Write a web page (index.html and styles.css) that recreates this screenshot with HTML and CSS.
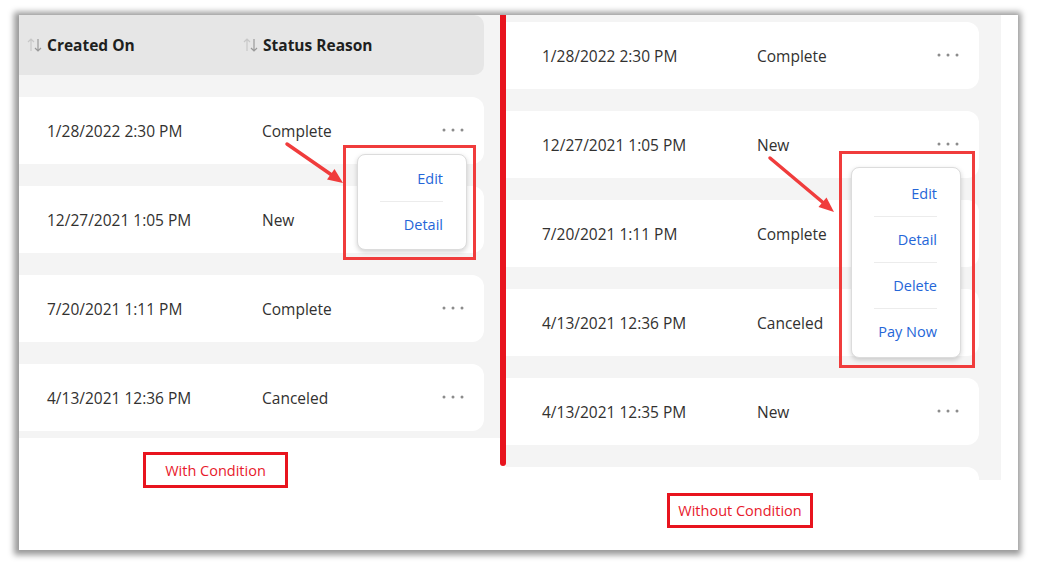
FILE: index.html
```html
<!DOCTYPE html>
<html lang="en">
<head>
    <meta charset="UTF-8">
    <title>Row actions with and without condition</title>
    <link rel="stylesheet" href="styles.css">
</head>
<body>

    <div class="shot">

        <!-- Left: menu items filtered by condition -->
        <div class="panel panel-left">
            <div class="list">
                <div class="list-head">
                    <div class="cell-date">
                        <svg class="sort-icon" width="15" height="16" viewBox="0 0 15 16"><path d="M4 14V2M1 5l3-3 3 3" stroke="#c8c8c8" stroke-width="1.2" fill="none"/><path d="M11 2v12M8 11l3 3 3-3" stroke="#9a9a9a" stroke-width="1.2" fill="none"/></svg>
                        Created On
                    </div>
                    <div class="cell-status">
                        <svg class="sort-icon" width="15" height="16" viewBox="0 0 15 16"><path d="M4 14V2M1 5l3-3 3 3" stroke="#c8c8c8" stroke-width="1.2" fill="none"/><path d="M11 2v12M8 11l3 3 3-3" stroke="#9a9a9a" stroke-width="1.2" fill="none"/></svg>
                        Status Reason
                    </div>
                </div>
                <div class="rows">
                    <div class="row">
                        <div class="cell-date">1/28/2022 2:30 PM</div>
                        <div class="cell-status">Complete</div>
                        <svg class="more" width="22" height="4" viewBox="0 0 22 4"><circle cx="2" cy="2" r="1.5"/><circle cx="11" cy="2" r="1.5"/><circle cx="20" cy="2" r="1.5"/></svg>
                    </div>
                    <div class="row">
                        <div class="cell-date">12/27/2021 1:05 PM</div>
                        <div class="cell-status">New</div>
                    </div>
                    <div class="row">
                        <div class="cell-date">7/20/2021 1:11 PM</div>
                        <div class="cell-status">Complete</div>
                        <svg class="more" width="22" height="4" viewBox="0 0 22 4"><circle cx="2" cy="2" r="1.5"/><circle cx="11" cy="2" r="1.5"/><circle cx="20" cy="2" r="1.5"/></svg>
                    </div>
                    <div class="row">
                        <div class="cell-date">4/13/2021 12:36 PM</div>
                        <div class="cell-status">Canceled</div>
                        <svg class="more" width="22" height="4" viewBox="0 0 22 4"><circle cx="2" cy="2" r="1.5"/><circle cx="11" cy="2" r="1.5"/><circle cx="20" cy="2" r="1.5"/></svg>
                    </div>
                </div>
            </div>
            <div class="caption-wrap">
                <span class="caption">With Condition</span>
            </div>

            <div class="highlight highlight-left">
                <div class="menu">
                    <div class="menu-item">Edit</div>
                    <div class="menu-item">Detail</div>
                </div>
            </div>
        </div>

        <div class="divider"></div>

        <!-- Right: every menu item shown -->
        <div class="panel panel-right">
            <div class="list">
                <div class="rows">
                    <div class="row">
                        <div class="cell-date">1/28/2022 2:30 PM</div>
                        <div class="cell-status">Complete</div>
                        <svg class="more" width="22" height="4" viewBox="0 0 22 4"><circle cx="2" cy="2" r="1.5"/><circle cx="11" cy="2" r="1.5"/><circle cx="20" cy="2" r="1.5"/></svg>
                    </div>
                    <div class="row">
                        <div class="cell-date">12/27/2021 1:05 PM</div>
                        <div class="cell-status">New</div>
                        <svg class="more" width="22" height="4" viewBox="0 0 22 4"><circle cx="2" cy="2" r="1.5"/><circle cx="11" cy="2" r="1.5"/><circle cx="20" cy="2" r="1.5"/></svg>
                    </div>
                    <div class="row">
                        <div class="cell-date">7/20/2021 1:11 PM</div>
                        <div class="cell-status">Complete</div>
                    </div>
                    <div class="row">
                        <div class="cell-date">4/13/2021 12:36 PM</div>
                        <div class="cell-status">Canceled</div>
                    </div>
                    <div class="row">
                        <div class="cell-date">4/13/2021 12:35 PM</div>
                        <div class="cell-status">New</div>
                        <svg class="more" width="22" height="4" viewBox="0 0 22 4"><circle cx="2" cy="2" r="1.5"/><circle cx="11" cy="2" r="1.5"/><circle cx="20" cy="2" r="1.5"/></svg>
                    </div>
                    <div class="row"></div>
                </div>
            </div>
            <div class="caption-wrap">
                <span class="caption">Without Condition</span>
            </div>

            <div class="highlight highlight-right">
                <div class="menu">
                    <div class="menu-item">Edit</div>
                    <div class="menu-item">Detail</div>
                    <div class="menu-item">Delete</div>
                    <div class="menu-item">Pay Now</div>
                </div>
            </div>
        </div>
    </div>

    <!-- callout arrows drawn over the screenshot -->
    <svg class="arrows" width="1038" height="565" viewBox="0 0 1038 565">
        <line x1="287" y1="144" x2="331" y2="174.5" stroke="#f03c3c" stroke-width="3.5" stroke-linecap="round"/>
        <polygon points="343,183 327,179.5 334.5,169" fill="#f03c3c"/>
        <line x1="770" y1="158" x2="823" y2="202.5" stroke="#f03c3c" stroke-width="3.5" stroke-linecap="round"/>
        <polygon points="834,212 818.5,207 826.5,197.5" fill="#f03c3c"/>
    </svg>

</body>
</html>
```

FILE: styles.css
```css
body {
    margin: 0;
    padding: 15px 0 0 19px;
    background: #ffffff;
    font-family: 'Open Sans', 'Liberation Sans', sans-serif;
    font-size: 15.5px;
    color: #323130;
    position: relative;
    height: 565px;
    box-sizing: border-box;
    overflow: hidden;
}

.shot {
    width: 999px;
    height: 535px;
    display: flex;
    background: #ffffff;
    box-shadow: -1px 1px 6px 4px rgba(0, 0, 0, 0.4);
}

.panel {
    position: relative;
    display: flex;
    flex-direction: column;
}

.panel-left {
    width: 481px;
}

.panel-right {
    width: 512px;
}

/* gray list background */
.list {
    background: #f4f4f4;
    overflow: hidden;
}

.panel-left .list {
    height: 423px;
}

.panel-right .list {
    width: 495px;
    height: 465px;
}

.list-head {
    display: flex;
    align-items: center;
    width: 465px;
    height: 60px;
    background: #e6e6e6;
    border-radius: 0 10px 10px 0;
    font-weight: 700;
    font-size: 15.5px;
    color: #201f1e;
}

.list-head .cell-date,
.list-head .cell-status {
    display: flex;
    align-items: center;
    gap: 5px;
}

.list-head .cell-date {
    padding-left: 8px;
    width: 224px;
}

.sort-icon {
    flex: none;
}

.rows {
    display: flex;
    flex-direction: column;
    gap: 22px;
    padding-top: 22px;
}

.panel-right .rows {
    padding-top: 7px;
}

.row {
    display: flex;
    align-items: center;
    flex: none;
    height: 67px;
    background: #ffffff;
    border-radius: 0 12px 12px 0;
}

.panel-left .row {
    width: 465px;
}

.panel-right .row {
    width: 473px;
}

.cell-date {
    box-sizing: border-box;
}

.panel-left .row .cell-date {
    padding-left: 28px;
    width: 243px;
}

.panel-right .row .cell-date {
    padding-left: 36px;
    width: 251px;
}

.cell-status {
    flex: 1;
}

.more {
    fill: #8c8c8c;
    margin-right: 20px;
    margin-bottom: 2px;
}

/* red vertical separator */
.divider {
    width: 6px;
    height: 451px;
    background: #e8141e;
    border-radius: 0 0 3px 3px;
}

.caption-wrap {
    display: flex;
}

.panel-left .caption-wrap {
    padding: 14px 0 0 124px;
}

.panel-right .caption-wrap {
    padding: 13px 0 0 161px;
}

.caption {
    box-sizing: border-box;
    display: flex;
    align-items: center;
    justify-content: center;
    height: 36px;
    border: 3px solid #e8141e;
    color: #e8192c;
    font-size: 14.5px;
}

.panel-left .caption {
    width: 145px;
}

.panel-right .caption {
    width: 146px;
    height: 35px;
}

/* highlighted popup menus */
.highlight {
    position: absolute;
    box-sizing: border-box;
    border: 3px solid #f03c3c;
}

.highlight-left {
    left: 324px;
    top: 130px;
    width: 133px;
    height: 115px;
    padding: 6px 0 0 11px;
}

.highlight-right {
    left: 333px;
    top: 136px;
    width: 136px;
    height: 217px;
    padding: 13px 0 0 9px;
}

.menu {
    box-sizing: border-box;
    width: 110px;
    background: #ffffff;
    border: 1px solid #dcdcdc;
    border-radius: 8px;
    box-shadow: 0 2px 5px rgba(0, 0, 0, 0.18);
    padding: 1px 0 2px 22px;
}

.highlight-right .menu {
    padding-top: 3px;
    padding-bottom: 3px;
}

.menu-item {
    height: 45px;
    display: flex;
    align-items: center;
    justify-content: flex-end;
    margin-right: 23px;
    color: #2566d8;
    font-size: 14.5px;
}

.highlight-left .menu-item {
    height: 45px;
}

.menu-item + .menu-item {
    border-top: 1px solid #ececec;
}

.arrows {
    position: absolute;
    top: 0;
    left: 0;
    pointer-events: none;
}
```
